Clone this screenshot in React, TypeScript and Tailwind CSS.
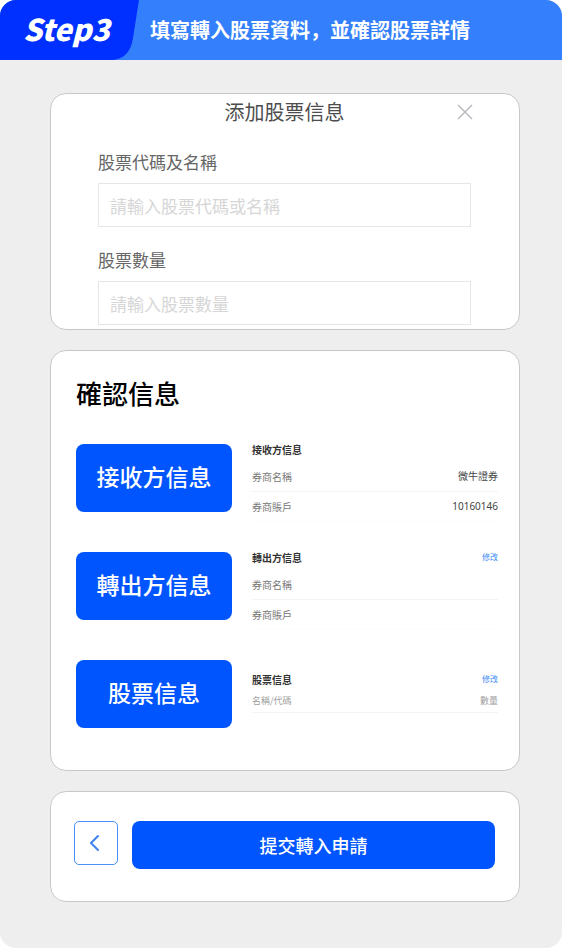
import type { ReactNode } from "react";

interface Row {
  label: string;
  value?: string;
}

interface SectionProps {
  name: string;
  editable?: boolean;
  className?: string;
  children: ReactNode;
}

const receiver: Row[] = [
  { label: "券商名稱", value: "微牛證券" },
  { label: "券商賬戶", value: "10160146" },
];

const sender: Row[] = [{ label: "券商名稱" }, { label: "券商賬戶" }];

function StepHeader() {
  return (
    <header className="relative flex h-[60px] items-center bg-[#347ffc] text-white">
      <svg
        className="absolute top-0 left-0"
        width="140"
        height="60"
        viewBox="0 0 140 60"
        aria-hidden="true"
      >
        <path d="M0 0H139L133 38C131 52 124 60 110 60H0Z" fill="#0030ff" />
      </svg>
      <span className="relative w-[150px] shrink-0 pb-1 pl-[23px] text-[30px] leading-10 font-black italic">
        Step3
      </span>
      <h1 className="text-xl font-bold">填寫轉入股票資料，並確認股票詳情</h1>
    </header>
  );
}

function Field({ id, label, placeholder }: { id: string; label: string; placeholder: string }) {
  return (
    <div>
      <label htmlFor={id} className="block text-[17px] leading-6 text-[#666]">
        {label}
      </label>
      <input
        id={id}
        type="text"
        placeholder={placeholder}
        className="mt-[9px] block h-11 w-full border border-[#e6e6e6] bg-white px-[11px] text-[17px] text-[#444] outline-none placeholder:text-[#d6d6d6]"
      />
    </div>
  );
}

function AddStockCard() {
  return (
    <section className="rounded-2xl border border-[#c8c8c8] bg-white pr-12 pb-1 pl-[47px]">
      <div className="relative flex h-9 items-center justify-center">
        <h2 className="text-xl text-[#4d4d4d]">添加股票信息</h2>
        <button type="button" aria-label="關閉" className="absolute top-2 -right-1 p-0.5">
          <svg
            className="block"
            width="16"
            height="16"
            viewBox="0 0 16 16"
            fill="none"
            stroke="#b4b7bb"
          >
            <path d="M1 1L15 15M15 1L1 15" strokeWidth="1.4" />
          </svg>
        </button>
      </div>
      <div className="mt-5 grid gap-[21px]">
        <Field id="code" label="股票代碼及名稱" placeholder="請輸入股票代碼或名稱" />
        <Field id="amount" label="股票數量" placeholder="請輸入股票數量" />
      </div>
    </section>
  );
}

function Section({ name, editable, className = "", children }: SectionProps) {
  return (
    <div className="flex min-h-[108px] items-start gap-5">
      <button
        type="button"
        className="mt-0.5 h-[68px] w-[156px] shrink-0 rounded-lg bg-[#0055ff] pb-1 text-[23px] font-medium text-white"
      >
        {name}
      </button>
      <div className={`min-w-0 flex-1 ${className}`}>
        <div className="flex h-3.5 items-center justify-between">
          <h3 className="text-[10px] font-bold text-[#333]">{name}</h3>
          {editable && (
            <a href="#" className="text-[8px] text-[#3d8df5]">
              修改
            </a>
          )}
        </div>
        {children}
      </div>
    </div>
  );
}

function Details({ rows }: { rows: Row[] }) {
  return (
    <dl className="mt-1.5 text-[10px]">
      {rows.map((row) => (
        <div
          key={row.label}
          className="flex h-[30px] items-center justify-between border-b border-[#f4f4f4] last:border-[#fcfcfc]"
        >
          <dt className="text-[#777]">{row.label}</dt>
          <dd className="font-['Noto_Sans','Noto_Sans_CJK_SC',sans-serif] text-[#444]">
            {row.value}
          </dd>
        </div>
      ))}
    </dl>
  );
}

function ConfirmCard() {
  return (
    <section className="mt-5 rounded-2xl border border-[#c8c8c8] bg-white pt-[22px] pr-[21px] pb-1 pl-[25px]">
      <h2 className="text-[26px] leading-10 font-medium text-black">確認信息</h2>
      <div className="mt-[29px]">
        <Section name="接收方信息">
          <Details rows={receiver} />
        </Section>
        <Section name="轉出方信息" editable>
          <Details rows={sender} />
        </Section>
        <Section name="股票信息" editable className="pt-3.5">
          <table className="mt-1 w-full text-[9px] text-[#a0a0a0]">
            <thead>
              <tr className="h-[22px] border-b border-[#f4f4f4]">
                <th className="p-0 text-left font-normal">名稱/代碼</th>
                <th className="p-0 text-right font-normal">數量</th>
              </tr>
            </thead>
          </table>
        </Section>
      </div>
    </section>
  );
}

function ActionsCard() {
  return (
    <section className="mt-5 flex items-start gap-3.5 rounded-2xl border border-[#c8c8c8] bg-white pt-[29px] pr-6 pb-8 pl-[23px]">
      <button
        type="button"
        aria-label="返回"
        className="flex size-11 shrink-0 items-center justify-center rounded-[5px] border border-[#4a90f7] pr-1"
      >
        <svg width="10" height="18" viewBox="0 0 10 18" fill="none" stroke="#3f82f0">
          <path d="M9 2L2 9L9 16" strokeWidth="2" strokeLinecap="round" strokeLinejoin="round" />
        </svg>
      </button>
      <button
        type="submit"
        className="h-12 flex-1 rounded-lg bg-[#0055ff] text-lg font-medium text-white"
      >
        提交轉入申請
      </button>
    </section>
  );
}

export default function App() {
  return (
    <div className="min-h-screen bg-white font-['Noto_Sans_CJK_SC',sans-serif]">
      <div className="min-h-screen overflow-hidden rounded-2xl bg-[#eeeeee]">
        <StepHeader />
        <main className="pt-[33px] pr-[42px] pb-[46px] pl-[50px]">
          <AddStockCard />
          <ConfirmCard />
          <ActionsCard />
        </main>
      </div>
    </div>
  );
}
